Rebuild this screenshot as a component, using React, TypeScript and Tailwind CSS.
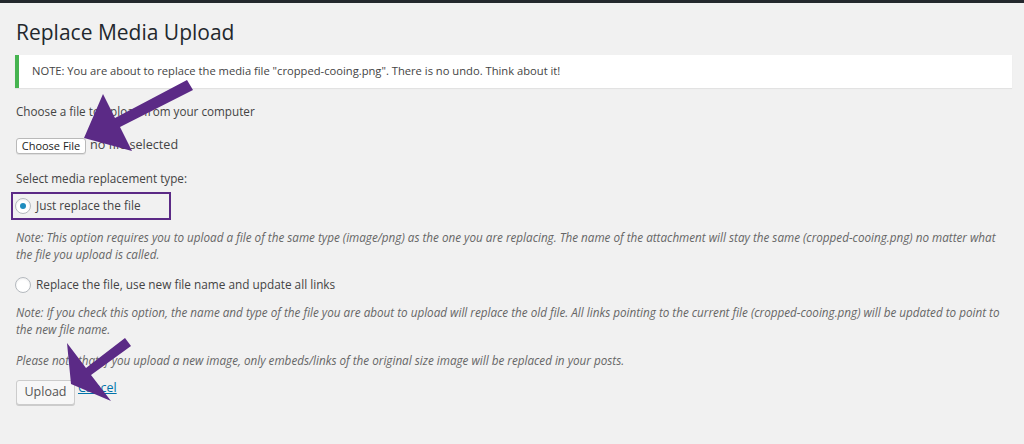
import React from "react";

function Radio({ checked }: { checked?: boolean }) {
  return (
    <span className="w-[16px] h-[16px] rounded-full border border-[#b4b9be] bg-white shadow-[inset_0_1px_2px_rgba(0,0,0,0.07)] flex items-center justify-center shrink-0">
      {checked && <span className="w-[6px] h-[6px] rounded-full bg-[#1e8cbe]" />}
    </span>
  );
}

function Arrows() {
  return (
    <svg className="absolute inset-0 pointer-events-none" width="1024" height="444" viewBox="0 0 1024 444">
      <polygon
        points="187,80 115,118 103,94 84,138 132,151 120,127 193,90"
        fill="#5b2a86"
      />
      <polygon
        points="125,338 86,368 67,343 71,384 111,401 91,375 131,346"
        fill="#5b2a86"
      />
    </svg>
  );
}

export default function App() {
  return (
    <div className="relative w-[1024px] h-[444px] overflow-hidden bg-[#f1f1f1] font-['Open_Sans',sans-serif] text-[#444]">
      <div className="h-[3px] bg-[#23282d]" />
      <div className="pl-4 pr-[12px]">
        <h1 className="pt-[15px] text-[21px] leading-[29px] text-[#23282d] font-normal">Replace Media Upload</h1>

        {/* notice */}
        <div className="mt-[8px] -ml-px h-[33px] flex items-center bg-white border-l-4 border-[#46b450] shadow-[0_1px_1px_rgba(0,0,0,0.06)] pl-[13px] text-[11.2px]">
          NOTE: You are about to replace the media file "cropped-cooing.png". There is no undo. Think about it!
        </div>

        <p className="mt-[13px] text-[11.7px] leading-5">Choose a file to upload from your computer</p>

        <div className="mt-[16px] h-[17px] flex items-center gap-[4px]">
          <button className="h-[16px] w-[70px] bg-white border border-[#b9b9b9] rounded-[3px] text-[11px] leading-none text-[#222] shadow-[0_1px_0_rgba(0,0,0,0.08)]">
            Choose File
          </button>
          <span className="text-[12.6px]">no file selected</span>
        </div>

        <p className="mt-[14px] text-[11.7px] leading-5">Select media replacement type:</p>

        <div className="mt-[4px] -ml-[5px] w-[160px] h-[28px] border-2 border-[#5b2a86] flex items-center pl-[2px] gap-[5px] text-[11.8px]">
          <Radio checked />
          <span>Just replace the file</span>
        </div>

        <p className="mt-[9px] text-[11.7px] leading-[17px] italic text-[#666]">
          Note: This option requires you to upload a file of the same type (image/png) as the one you are replacing. The name of the attachment will stay the same (cropped-cooing.png) no matter what the file you upload is called.
        </p>

        <div className="mt-[14px] h-[16px] flex items-center gap-[5px] -ml-px text-[11.8px]">
          <Radio />
          <span>Replace the file, use new file name and update all links</span>
        </div>

        <p className="mt-[11px] text-[11.7px] leading-[17px] italic text-[#666]">
          Note: If you check this option, the name and type of the file you are about to upload will replace the old file. All links pointing to the current file (cropped-cooing.png) will be updated to point to the new file name.
        </p>

        <p className="mt-[14px] text-[11.7px] leading-[17px] italic text-[#666]">
          Please note that if you upload a new image, only embeds/links of the original size image will be replaced in your posts.
        </p>

        <div className="mt-[11px] flex items-start gap-[3px]">
          <button className="h-[25px] w-[59px] bg-[#f7f7f7] border border-[#cccccc] rounded-[3px] text-[12.5px] text-[#555] shadow-[0_1px_0_#cccccc]">
            Upload
          </button>
          <a href="#" className="text-[12.5px] leading-4 text-[#0073aa] underline">Cancel</a>
        </div>
      </div>
      <Arrows />
    </div>
  );
}
